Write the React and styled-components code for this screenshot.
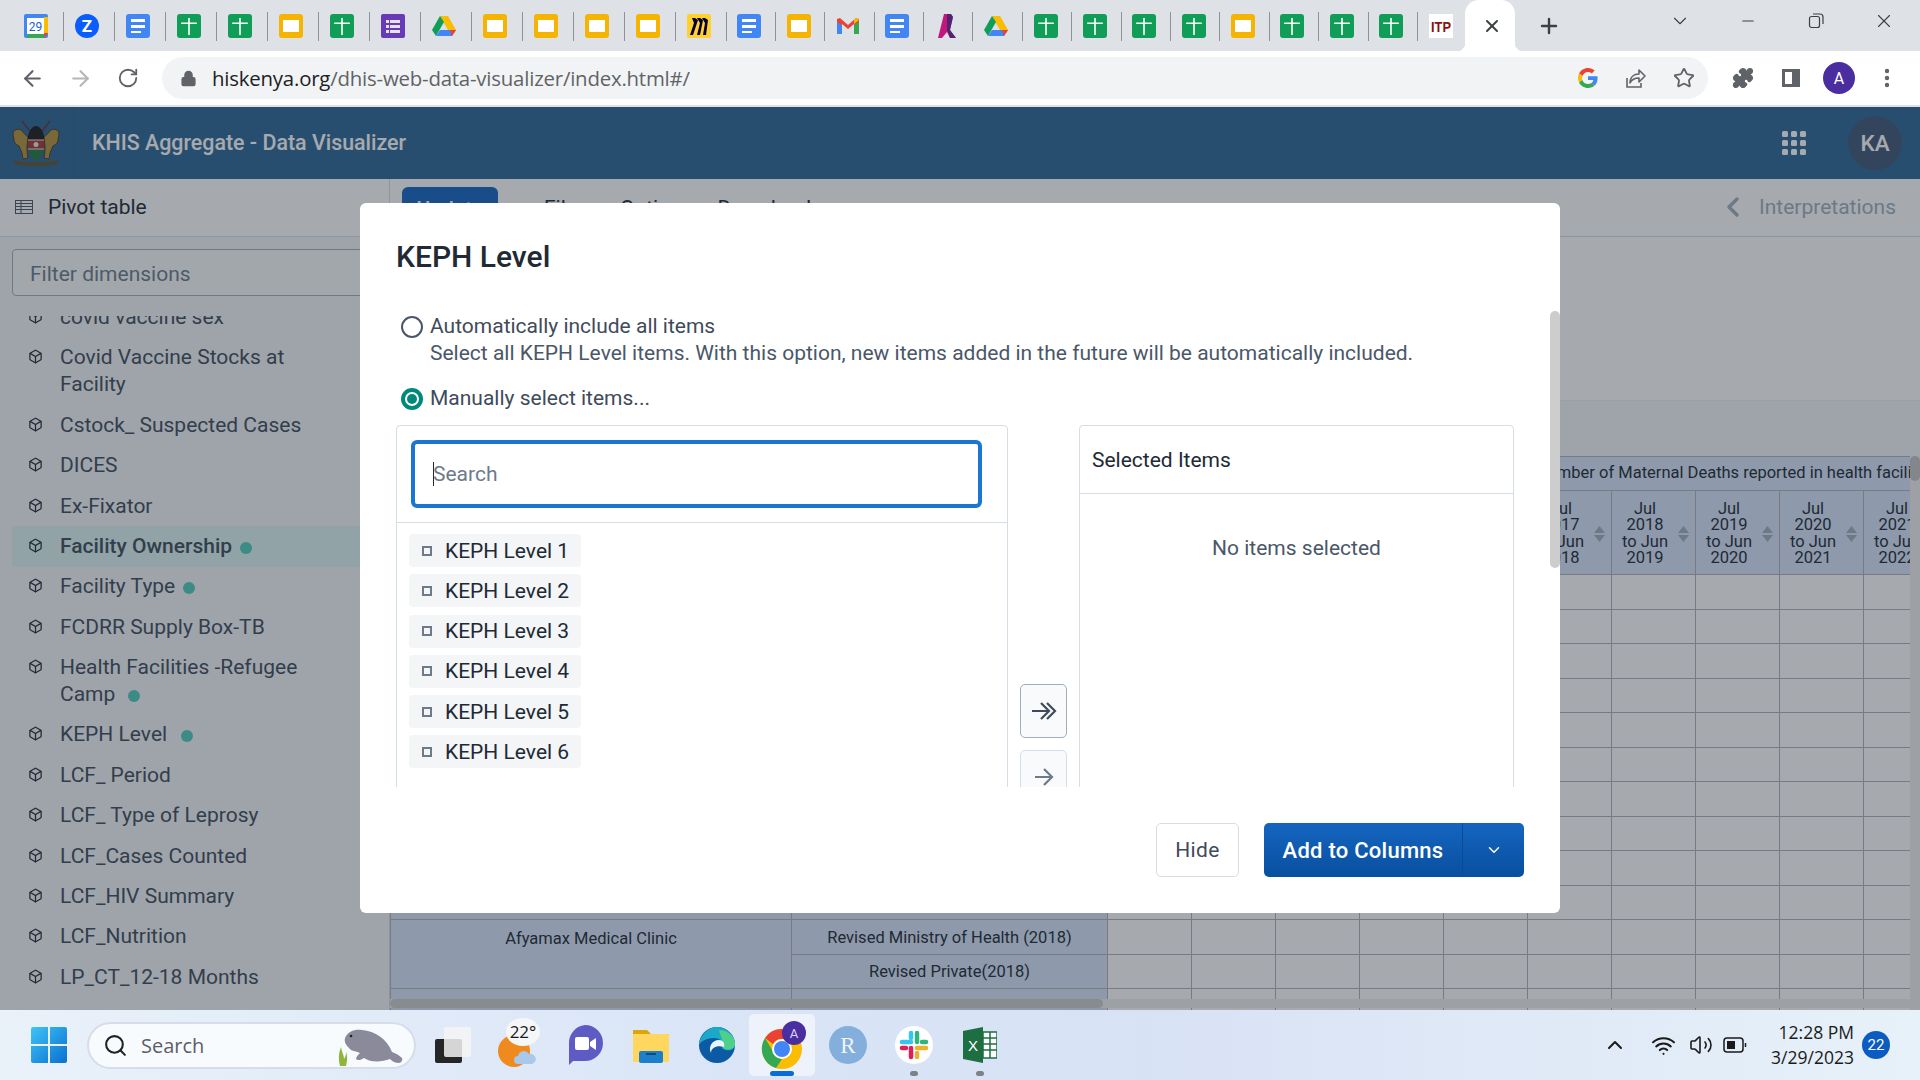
import React from 'react';
import styled, { createGlobalStyle } from 'styled-components';
import {
  ArrowLeft, ArrowRight, RotateCw, Lock, Star, Puzzle, Plus, X, Minus, ChevronDown, ChevronLeft,
  ChevronUp, Box, Search as SearchIcon, Wifi, Volume2, MoreVertical,
} from 'lucide-react';

const GlobalStyle = createGlobalStyle`
  html, body { margin: 0; padding: 0; width: 1920px; height: 1080px; overflow: hidden; }
  body { font-family: Roboto, "Liberation Sans", sans-serif; }
  * { box-sizing: border-box; }
`;

const Screen = styled.div`
  width: 1920px;
  height: 1080px;
  display: flex;
  flex-direction: column;
  overflow: hidden;
`;

/* ---------- browser chrome ---------- */
const TabStrip = styled.div`
  height: 51px;
  flex: none;
  background: #dee1e6;
  display: flex;
  align-items: stretch;
  padding-left: 10.5px;
`;

const Tab = styled.div`
  width: ${(p) => p.$w}px;
  flex: none;
  display: flex;
  align-items: center;
  justify-content: center;
  position: relative;
  padding-top: 1px;

  &::after {
    content: '';
    display: ${(p) => (p.$last ? 'none' : 'block')};
    position: absolute;
    right: -2px;
    top: 12px;
    height: 29px;
    width: 1px;
    background: #8f9296;
  }
`;

const ActiveTab = styled.div`
  width: 50px;
  flex: none;
  background: #fff;
  border-radius: 14px 14px 0 0;
  display: flex;
  align-items: center;
  justify-content: center;
  padding-left: 3px;
  color: #3c4043;
  position: relative;

  &::before, &::after {
    content: '';
    position: absolute;
    bottom: 0;
    width: 8px;
    height: 8px;
  }
  &::before { left: -8px; background: radial-gradient(circle at 0 0, #dee1e6 8px, #fff 8.5px); }
  &::after { right: -8px; background: radial-gradient(circle at 100% 0, #dee1e6 8px, #fff 8.5px); }
`;

const NewTab = styled.div`
  width: 48px;
  margin-left: 10px;
  display: flex;
  align-items: center;
  justify-content: center;
  color: #3c4043;
`;

const WindowControls = styled.div`
  margin-left: auto;
  display: flex;
  padding-right: 2px;
  padding-bottom: 9px;
`;

const WindowButton = styled.div`
  width: 68px;
  display: flex;
  align-items: center;
  justify-content: center;
  color: #3c4043;
`;

const Toolbar = styled.div`
  height: 56px;
  flex: none;
  background: #fff;
  border-bottom: 2px solid #dfe1e4;
  display: flex;
  align-items: flex-start;
  padding: 6px 9px 0 8px;
`;

const NavButton = styled.div`
  width: 48px;
  height: 42px;
  flex: none;
  display: flex;
  align-items: center;
  justify-content: center;
  color: ${(p) => (p.$off ? '#b3b6ba' : '#5f6368')};
`;

const AddressPill = styled.div`
  flex: 1;
  height: 42px;
  margin: 0 11px 0 10px;
  border-radius: 21px;
  background: #f1f3f4;
  display: flex;
  align-items: center;
  padding-left: 18px;
  color: #5f6368;
`;

const Url = styled.div`
  margin-left: 15px;
  flex: 1;
  font-family: "Open Sans", sans-serif;
  font-size: 20.4px;
  letter-spacing: -0.2px;
  color: #5f6368;
  white-space: nowrap;

  b { font-weight: 400; color: #202124; }
`;

const Avatar = styled.div`
  width: 32px;
  height: 32px;
  border-radius: 50%;
  background: #4a2ea0;
  color: #fff;
  font-size: 16px;
  display: flex;
  align-items: center;
  justify-content: center;
`;

/* ---------- page behind the dialog ---------- */
const Page = styled.div`
  flex: 1;
  min-height: 0;
  position: relative;
  display: flex;
  flex-direction: column;
  background: #f4f6f8;
`;

const AppHeader = styled.header`
  height: 72px;
  flex: none;
  background: #2c6693;
  display: flex;
  align-items: center;
  color: #fff;
`;

const LogoCell = styled.div`
  width: 74px;
  height: 100%;
  flex: none;
  display: flex;
  align-items: center;
  padding-left: 10px;
  border-right: 1px solid #2a6089;
`;

const AppTitle = styled.div`
  margin: 0 0 2px 18px;
  font-size: 21.4px;
  font-weight: 500;
`;

const AppsGrid = styled.div`
  margin-left: auto;
  display: grid;
  grid-template-columns: repeat(3, 6px);
  gap: 3px;
  margin-right: 42px;
`;

const AppsDot = styled.span`
  width: 6px;
  height: 6px;
  border-radius: 1.5px;
  background: #fff;
`;

const UserBadge = styled.div`
  width: 54px;
  height: 54px;
  margin-right: 18px;
  border-radius: 50%;
  background: #3f5875;
  display: flex;
  align-items: center;
  justify-content: center;
  font-size: 22.5px;
  font-weight: 500;
`;

const Workspace = styled.div`
  flex: 1;
  min-height: 0;
  display: flex;
`;

const Sidebar = styled.aside`
  width: 390px;
  flex: none;
  background: #f3f5f7;
  border-right: 1px solid #d5dde5;
  display: flex;
  flex-direction: column;
  overflow: hidden;
`;

const TypeRow = styled.div`
  height: 58px;
  flex: none;
  background: #fff;
  border-bottom: 1px solid #d5dde5;
  display: flex;
  align-items: center;
  padding: 0 22px 2px 15px;
  font-size: 21px;
  color: #212934;
  gap: 15px;
`;

const FilterBox = styled.div`
  margin: 12px 12px 0;
  height: 47px;
  flex: none;
  border: 1px solid #a0adba;
  border-radius: 4px;
  background: #f9fafb;
  padding: 3px 0 0 17px;
  display: flex;
  align-items: center;
  font-size: 21px;
  color: #6e7a8a;
`;

const DimScroller = styled.div`
  flex: 1;
  min-height: 0;
  margin-top: 20px;
  overflow: hidden;
  padding: 0 12px;
`;

const DimList = styled.ul`
  list-style: none;
  margin: -18.6px 0 0;
  padding: 0;
`;

const DimItem = styled.li`
  display: flex;
  align-items: flex-start;
  padding: 6.7px 0 6.7px 16px;
  border-radius: 3px;
  background: ${(p) => (p.$active ? '#dcf3f0' : 'transparent')};
  color: #404b5a;
  font-size: 21px;
  line-height: 27px;
  font-weight: ${(p) => (p.$active ? 500 : 400)};

  svg { flex: none; margin-top: 5px; color: #212934; }
`;

const DimLabel = styled.span`
  margin-left: 17px;
  max-width: 290px;
`;

const DimDot = styled.span`
  display: inline-block;
  width: 12px;
  height: 12px;
  margin-left: ${(p) => p.$gap}px;
  border-radius: 50%;
  background: #50cbb9;
  vertical-align: -1px;
`;

const Main = styled.main`
  flex: 1;
  min-width: 0;
  display: flex;
  flex-direction: column;
  background: #fff;
`;

const MenuRow = styled.div`
  height: 58px;
  flex: none;
  border-bottom: 1px solid #d5dde5;
  display: flex;
  align-items: flex-start;
  padding: 8px 24px 0 12px;
  font-size: 21px;
  color: #212934;
`;

const UpdateButton = styled.div`
  width: 96px;
  height: 44px;
  border-radius: 6px;
  background: #1565c0;
  color: #fff;
  display: flex;
  align-items: center;
  justify-content: center;
  font-weight: 500;
`;

const MenuItem = styled.div`
  margin-left: ${(p) => p.$gap}px;
  line-height: 42px;
`;

const InterpretationsToggle = styled.div`
  margin-left: auto;
  display: flex;
  align-items: center;
  gap: 10px;
  line-height: 40px;
  height: 40px;
  color: #a0adba;
`;

const TitleZone = styled.div`
  height: 164px;
  flex: none;
  border-bottom: 1px solid #e8edf2;
`;

const Band = styled.div`
  height: 55px;
  flex: none;
  background: #f4f6f8;
`;

const TableWrap = styled.div`
  flex: 1;
  min-height: 0;
  display: flex;
  overflow: hidden;
  position: relative;
`;

const TableClip = styled.div`
  width: 1520px;
  flex: none;
  overflow: hidden;
`;

const PivotTable = styled.table`
  table-layout: fixed;
  width: 1557px;
  border-collapse: collapse;
  font-size: 16.5px;
  line-height: 16.5px;
  color: #212934;
`;

const HeadCell = styled.th`
  background: #d7e4f8;
  border: 1px solid #b3b3b5;
  font-weight: 400;
  padding: 0;
  height: ${(p) => p.$h}px;
  text-align: ${(p) => p.$align || 'center'};
  padding-left: ${(p) => p.$pad || 0}px;
  white-space: nowrap;
`;

const HeadInner = styled.div`
  display: flex;
  align-items: center;
  padding: 2px 0 0 7px;
  white-space: normal;
`;

const HeadText = styled.span`
  width: 52px;
  flex: none;
  text-align: center;
`;

const SortMark = styled.svg`
  width: 11px;
  height: 16px;
  margin-left: 7px;
  flex: none;
`;

const BodyTr = styled.tr`
  height: ${(p) => p.$h}px;
`;

const RowHead = styled.td`
  background: #d7e4f8;
  border: 1px solid #b3b3b5;
  text-align: center;
  vertical-align: ${(p) => (p.$top ? 'top' : 'middle')};
  padding: ${(p) => (p.$top ? '11px 0 0' : '2px 0 0')};
  white-space: nowrap;
`;

const DataCell = styled.td`
  background: #fff;
  border: 1px solid #b3b3b5;
  padding: 0;
`;

const VTrack = styled.div`
  flex: 1;
  background: #f1f1f1;
`;

const VThumb = styled.div`
  height: 25px;
  border-radius: 5px;
  background: #c5c5c5;
`;

const HTrack = styled.div`
  position: absolute;
  left: 0;
  right: 0;
  bottom: 2px;
  height: 9px;
  background: #f1f1f1;
`;

const HThumb = styled.div`
  width: 713px;
  height: 9px;
  border-radius: 5px;
  background: #cdcdcd;
`;

/* ---------- dialog ---------- */
const Layer = styled.div`
  position: absolute;
  inset: 0;
  background: rgba(33, 43, 54, 0.4);
  display: flex;
  justify-content: center;
  align-items: flex-start;
  padding-top: 96px;
`;

const Dialog = styled.div`
  width: 1200px;
  height: 710px;
  background: #fff;
  border-radius: 6px;
  display: flex;
  flex-direction: column;
  position: relative;
`;

const DialogBody = styled.div`
  flex: 1;
  min-height: 0;
  overflow: hidden;
  padding: 36px 47px 0 36px;
`;

const DialogTitle = styled.h2`
  margin: 0 0 38px;
  font-size: 30px;
  line-height: 36px;
  font-weight: 500;
  color: #212934;
`;

const RadioRow = styled.div`
  display: flex;
  align-items: flex-start;
  margin-bottom: ${(p) => p.$mb}px;
  font-size: 21px;
  line-height: 27px;
  color: #404b5a;
`;

const RadioMark = styled.span`
  width: 22px;
  height: 22px;
  flex: none;
  margin: 3px 7px 0 5px;
  border-radius: 50%;
  border: ${(p) => (p.$on ? '4px solid #00897b' : '2px solid #4a5768')};
  display: flex;
  align-items: center;
  justify-content: center;

  &::after {
    content: '';
    display: ${(p) => (p.$on ? 'block' : 'none')};
    width: 10px;
    height: 10px;
    border-radius: 50%;
    background: #00897b;
  }
`;

const RadioHelp = styled.div`
  color: #4a5768;
`;

const Transfer = styled.div`
  display: flex;
  height: 770px;
`;

const SourcePane = styled.div`
  width: 612px;
  flex: none;
  border: 1px solid #d5dde5;
  border-radius: 4px;
  overflow: hidden;
`;

const SearchArea = styled.div`
  height: 97px;
  padding: 14px 25px 0 14px;
  border-bottom: 1px solid #d5dde5;
`;

const SearchField = styled.div`
  height: 68px;
  border: 4px solid #1976d2;
  border-radius: 6px;
  padding-left: 18px;
  display: flex;
  align-items: center;
  font-size: 21px;
  color: #6e7a8a;
`;

const Caret = styled.span`
  width: 1px;
  height: 24px;
  background: #212934;
  margin-right: -1px;
`;

const OptionList = styled.div`
  padding: 11px 12px;
  display: flex;
  flex-direction: column;
  align-items: flex-start;
  gap: 7.3px;
`;

const OptionChip = styled.div`
  height: 33px;
  width: 172px;
  padding-left: 13px;
  border-radius: 4px;
  background: #f3f5f7;
  display: flex;
  align-items: center;
  gap: 13px;
  font-size: 21px;
  color: #212934;
`;

const OptionBox = styled.span`
  width: 10px;
  height: 10px;
  border: 2px solid #6e7a8a;
  flex: none;
`;

const ActionColumn = styled.div`
  width: 71px;
  flex: none;
  display: flex;
  flex-direction: column;
  align-items: center;
  justify-content: center;
  gap: 12px;
`;

const ActionButton = styled.div`
  width: 47px;
  height: 54px;
  border-radius: 5px;
  border: 1px solid ${(p) => (p.$off ? '#d5dde5' : '#a0adba')};
  background: #f9fafb;
  display: flex;
  align-items: center;
  justify-content: center;
  color: ${(p) => (p.$off ? '#6e7a8a' : '#404b5a')};
`;

const TargetPane = styled.div`
  width: 435px;
  flex: none;
  border: 1px solid #d5dde5;
  border-radius: 4px;
`;

const TargetHeader = styled.div`
  height: 68px;
  padding-left: 12px;
  border-bottom: 1px solid #d5dde5;
  display: flex;
  align-items: center;
  font-size: 21px;
  color: #212934;
`;

const EmptyNote = styled.div`
  padding-top: 41px;
  text-align: center;
  font-size: 21px;
  line-height: 27px;
  color: #4a5768;
`;

const DialogFooter = styled.div`
  height: 126px;
  flex: none;
  padding: 36px 36px 0 0;
  display: flex;
  justify-content: flex-end;
  gap: 25px;
`;

const HideButton = styled.div`
  width: 83px;
  height: 54px;
  border: 1px solid #d5dde5;
  border-radius: 5px;
  display: flex;
  align-items: center;
  justify-content: center;
  font-size: 21px;
  letter-spacing: 0.4px;
  color: #404b5a;
`;

const SplitButton = styled.div`
  width: 260px;
  height: 54px;
  border-radius: 5px;
  background: linear-gradient(#1565c0, #084f9f);
  display: flex;
  color: #fff;
  font-size: 22px;
  font-weight: 500;
`;

const SplitMain = styled.div`
  width: 199px;
  display: flex;
  align-items: center;
  justify-content: center;
  border-right: 1px solid #0b4a94;
  letter-spacing: 0.25px;
`;

const SplitArrow = styled.div`
  flex: 1;
  display: flex;
  align-items: center;
  justify-content: center;
`;

const DialogScrollThumb = styled.div`
  position: absolute;
  right: 0;
  top: 108px;
  width: 10px;
  height: 257px;
  border-radius: 5px;
  background: #cdcdcd;
`;

/* ---------- windows taskbar ---------- */
const Taskbar = styled.footer`
  height: 70px;
  flex: none;
  background: linear-gradient(90deg, #e9f2f9 0%, #d9e4f7 40%, #d8e2f5 60%, #e7f1f9 100%);
  display: flex;
  align-items: center;
  padding-left: 31px;
`;

const StartLogo = styled.svg`
  width: 36px;
  height: 36px;
  flex: none;
`;

const SearchPill = styled.div`
  width: 329px;
  height: 47px;
  margin-left: 20px;
  flex: none;
  border-radius: 24px;
  background: #f8fbfe;
  border: 2px solid #d6dde8;
  display: flex;
  align-items: center;
  padding-left: 14px;
  gap: 13px;
  font-size: 20px;
  color: #5b5f66;
  font-family: "Open Sans", sans-serif;
  overflow: hidden;
`;

const Manatee = styled.svg`
  margin-left: auto;
  margin-right: 7px;
  width: 70px;
  height: 42px;
  flex: none;
`;

const TaskIcons = styled.div`
  display: flex;
  margin-left: 4px;
`;

const TaskSlot = styled.div`
  width: 65.9px;
  height: 62px;
  flex: none;
  display: flex;
  align-items: center;
  justify-content: center;
  position: relative;
  border-radius: 5px;
  background: ${(p) => (p.$open ? 'rgba(255,255,255,0.55)' : 'transparent')};

  &::after {
    content: '';
    display: ${(p) => (p.$run || p.$open ? 'block' : 'none')};
    position: absolute;
    bottom: 0;
    left: 50%;
    transform: translateX(-50%);
    width: ${(p) => (p.$open ? '24px' : '8px')};
    height: 5px;
    border-radius: 3px;
    background: ${(p) => (p.$open ? '#0a6cd6' : '#7d8289')};
  }
`;

const Tray = styled.div`
  margin-left: auto;
  display: flex;
  align-items: center;
  color: #1b1b1b;
`;

const TrayIcon = styled.div`
  width: ${(p) => p.$w}px;
  display: flex;
  justify-content: center;
`;

const Clock = styled.div`
  margin-left: 16px;
  text-align: right;
  font-family: "Open Sans", sans-serif;
  font-size: 17.5px;
  line-height: 25px;
  color: #1b1b1b;
`;

const CountBadge = styled.div`
  width: 28px;
  height: 28px;
  margin: 0 30px 0 8px;
  border-radius: 50%;
  background: #0b5cc0;
  color: #fff;
  font-size: 15px;
  display: flex;
  align-items: center;
  justify-content: center;
`;

/* ---------- drawn icons ---------- */
const TabIcon = ({ kind }) => {
  if (kind === 'sheet') return (
    <svg width="24" height="24" viewBox="0 0 24 24"><rect width="24" height="24" rx="3" fill="#0f9d58" /><path d="M11.200 4h1.600v4.500h7v1.600h-7V21h-1.600V10.100h-7V8.500h7z" fill="#fff" /></svg>
  );
  if (kind === 'slide') return (
    <svg width="24" height="24" viewBox="0 0 24 24"><rect width="24" height="24" rx="3" fill="#f4b400" /><rect x="4" y="6" width="16" height="12" fill="#fff" /></svg>
  );
  if (kind === 'doc') return (
    <svg width="24" height="24" viewBox="0 0 24 24"><rect width="24" height="24" rx="3" fill="#4285f4" /><path d="M5 5h14v3H5zM5 11h14v3H5zM5 17h10v2H5z" fill="#fff" /></svg>
  );
  if (kind === 'form') return (
    <svg width="24" height="24" viewBox="0 0 24 24"><rect width="24" height="24" rx="2" fill="#673ab7" /><path d="M9 6h10v3H9zM9 11h10v3H9zM9 16h10v3H9zM5 6h3v3H5zM5 11h3v3H5zM5 16h3v3H5z" fill="#e8e0f5" /></svg>
  );
  if (kind === 'drive') return (
    <svg width="24" height="24" viewBox="0 0 24 24"><path d="M8 2h8l8 14h-8z" fill="#fbbc04" /><path d="M8 2 0 16l4 6 8-14z" fill="#0f9d58" /><path d="M4 22h16l4-6H8z" fill="#4285f4" /><path d="M20 22l4-6h-6z" fill="#ea4335" /></svg>
  );
  if (kind === 'cal') return (
    <svg width="24" height="24" viewBox="0 0 24 24"><rect width="24" height="24" rx="2" fill="#4285f4" /><rect x="3" y="4" width="17" height="16" fill="#fff" /><path d="M20 3h4v16h-4z" fill="#fbbc04" /><path d="M3 20h17v4H3z" fill="#34a853" /><path d="M20 19h4l-4 5z" fill="#ea4335" /><text x="11.500" y="17" fontSize="12" fontFamily="Roboto" textAnchor="middle" fill="#1a5fd0">29</text></svg>
  );
  if (kind === 'zoom') return (
    <svg width="24" height="24" viewBox="0 0 24 24"><circle cx="12" cy="12" r="12" fill="#0b5cff" /><text x="12" y="18" fontSize="17" fontWeight="700" fontFamily="Roboto" textAnchor="middle" fill="#fff">Z</text></svg>
  );
  if (kind === 'miro') return (
    <svg width="24" height="24" viewBox="0 0 24 24"><rect width="24" height="24" rx="2" fill="#ffd02f" /><path d="M15 4h3l3 2-2 15h-3l2-12-3-5zM10 4h3l3 2-3 15h-3l3-12-3-5zM5 4h3l3 2-5 15H3l4-12-2-5z" fill="#050038" /></svg>
  );
  if (kind === 'gmail') return (
    <svg width="24" height="24" viewBox="0 0 24 24"><path d="M1 5v15h5V10l6 5 6-5v10h5V5l-3-1-8 7-8-7z" fill="#ea4335" /><path d="M1 8v12h5V11z" fill="#4285f4" /><path d="M23 8v12h-5V11z" fill="#34a853" /><path d="M18 5v5l5-4-2-2z" fill="#fbbc04" /></svg>
  );
  if (kind === 'lens') return (
    <svg width="24" height="24" viewBox="0 0 24 24"><path d="M9 0h7l2 3-3 13 6 8h-6l-3-6-5 6H3z" fill="#c2187c" /><path d="M12 0h4l2 3-3 13 6 8h-6l-3-8z" fill="#1f2a6e" opacity=".7" /></svg>
  );
  return (
    <svg width="24" height="24" viewBox="0 0 24 24"><rect width="24" height="24" fill="#fff" /><text x="12" y="18" fontSize="15" fontWeight="700" fontFamily="Liberation Sans" textLength="20" lengthAdjust="spacingAndGlyphs" textAnchor="middle" fill="#8b1010">ITP</text></svg>
  );
};

const CoatOfArms = () => (
  <svg width="52" height="48" viewBox="0 0 52 48">
    <path d="M12 2l11 14M40 2L29 16" stroke="#6b2f2a" strokeWidth="1.400" />
    <path d="M18 17c1-6 5-10 8-10s7 4 8 10z" fill="#1c1c1c" />
    <g fill="#b8923a" stroke="#3b2f14" strokeWidth=".8">
      <path d="M3 14c1-4 7-5 9-2 2 2 3 4 6 6l-1 9c0 4 0 8 1 12l-5 1-1-6-3-7c-3-2-5-3-5-6 0-3-1-4-1-7z" />
      <path d="M49 14c-1-4-7-5-9-2-2 2-3 4-6 6l1 9c0 4 0 8-1 12l5 1 1-6 3-7c3-2 5-3 5-6 0-3 1-4 1-7z" />
    </g>
    <path d="M18 17h16v9c0 7-3 12-8 16-5-4-8-9-8-16z" fill="#a83232" />
    <path d="M18 17h16v4H18z" fill="#1c1c1c" />
    <path d="M18.400 30h15.200c-1 5-3.500 9-7.600 12-4.100-3-6.600-7-7.600-12z" fill="#1f7a3f" />
    <path d="M18 21h16M18 30h16" stroke="#eee8d8" strokeWidth="1" />
    <circle cx="26" cy="25.500" r="2.500" fill="#eee8d8" />
    <path d="M5 41c8 3 34 3 42 0l1 4c-9 3-35 3-44 0z" fill="#5f5334" />
  </svg>
);

const PivotIcon = () => (
  <svg width="18" height="14" viewBox="0 0 18 14" fill="none" stroke="#4a5768" strokeWidth="1">
    <rect x=".5" y=".5" width="17" height="13" /><path d="M.5 3.500h17M.5 6.500h17M.5 9.500h17M6 .5v13" />
  </svg>
);

const GoogleG = () => (
  <svg width="20" height="20" viewBox="0 0 48 48">
    <path fill="#ea4335" d="M24 9.500c3.500 0 6.700 1.300 9.100 3.500l6.800-6.800C35.800 2.400 30.200 0 24 0 14.600 0 6.600 5.400 2.700 13.200l7.900 6.200C12.400 13.600 17.700 9.500 24 9.500z" />
    <path fill="#4285f4" d="M47 24.500c0-1.600-.2-3.100-.4-4.500H24v9h12.900c-.6 3-2.300 5.500-4.800 7.200l7.700 6C44.300 38 47 31.800 47 24.500z" />
    <path fill="#fbbc05" d="M10.500 28.600a14.500 14.500 0 0 1 0-9.200l-7.900-6.200a24 24 0 0 0 0 21.600z" />
    <path fill="#34a853" d="M24 48c6.500 0 11.900-2.100 15.900-5.800l-7.700-6c-2.200 1.400-4.900 2.300-8.200 2.300-6.300 0-11.600-4.200-13.500-9.900l-7.900 6.200C6.600 42.600 14.600 48 24 48z" />
  </svg>
);

const ShareBoxIcon = () => (
  <svg width="22" height="22" viewBox="0 0 22 22" fill="none" stroke="#5f6368" strokeWidth="1.600">
    <path d="M2 11v9h14v-4" />
    <path d="M5 16c0-6 4-9 9-9V3l6 6-6 6v-4c-4 0-7 1-9 5z" strokeLinejoin="round" />
  </svg>
);

const SidePanelIcon = () => (
  <svg width="20" height="20" viewBox="0 0 20 20"><path d="M1 1h18v18H1zM4 4v12h7V4z" fillRule="evenodd" fill="#5f6368" /></svg>
);

const DoubleArrow = () => (
  <svg width="26" height="20" viewBox="0 0 26 20" fill="none" stroke="currentColor" strokeWidth="2.200">
    <path d="M1 10h17M10 2l8 8-8 8M16 2l8 8-8 8" />
  </svg>
);

const SingleArrow = () => (
  <svg width="20" height="20" viewBox="0 0 20 20" fill="none" stroke="currentColor" strokeWidth="2.200">
    <path d="M1 10h17M10 2l8 8-8 8" />
  </svg>
);

const Sort = () => (
  <SortMark viewBox="0 0 11 16"><path d="M5.500 0 11 7H0zM5.500 16 0 9h11z" fill="#a0adba" /></SortMark>
);

const BatteryIcon = () => (
  <svg width="24" height="16" viewBox="0 0 24 16" fill="none" stroke="#1b1b1b" strokeWidth="1.500">
    <rect x="1" y="1" width="19" height="14" rx="3" /><rect x="4" y="4" width="8" height="8" fill="#1b1b1b" stroke="none" /><path d="M22.500 6v4" />
  </svg>
);

const taskArt = {
  view: (
    <svg width="36" height="36" viewBox="0 0 36 36"><rect x="0" y="12" width="27" height="24" rx="2" fill="#262626" /><rect x="9" y="0" width="27" height="30" rx="2" fill="#f4f4f4" opacity=".85" /></svg>
  ),
  weather: (
    <svg width="44" height="54" viewBox="0 0 44 54">
      <circle cx="17" cy="33" r="16" fill="#ef8a1e" />
      <path d="M21 46a4 4 0 0 1 0-8 6 6 0 0 1 11-2 5 5 0 0 1 3 10z" fill="#a9c8ec" />
      <ellipse cx="26" cy="14" rx="17" ry="14" fill="#f4f6f8" />
      <text x="26" y="20" fontSize="17" fontFamily="Open Sans" textAnchor="middle" fill="#1b1b1b">22°</text>
    </svg>
  ),
  teams: (
    <svg width="36" height="40" viewBox="0 0 36 40"><path d="M18 0a18 18 0 0 1 0 36H6l-4 4V18A18 18 0 0 1 18 0z" fill="#5f5bc4" /><rect x="8" y="12" width="14" height="13" rx="2" fill="#fff" /><path d="M23 17l6-4v12l-6-4z" fill="#fff" /></svg>
  ),
  folder: (
    <svg width="36" height="36" viewBox="0 0 36 36"><path d="M0 3h14l4 4h18v4H0z" fill="#dba50c" /><rect y="7" width="36" height="28" rx="1" fill="#ffd75e" /><rect x="6" y="24" width="24" height="12" rx="2" fill="#1b80c9" /><rect x="13" y="26" width="10" height="2" fill="#0a4a80" /></svg>
  ),
  edge: (
    <svg width="36" height="36" viewBox="0 0 36 36"><circle cx="18" cy="18" r="18" fill="#0c59a4" /><path d="M0 18C1 8 9 0 18 0c10 0 18 8 18 17 0 7-9 8-13 4 2-5-2-10-8-10-7 0-13 3-15 7z" fill="#1ba8c9" /><path d="M20 3c8 0 16 6 16 14 0 6-8 7-12 4 1-7-3-12-4-18z" fill="#4fd08a" /><path d="M12 26c-3-6 1-13 8-13 4 0 6 3 5 7-6-2-13 0-13 6z" fill="#e9f5ff" /></svg>
  ),
  chrome: (
    <svg width="44" height="48" viewBox="-2 0 44 48" style={{ overflow: 'visible' }}>
      <circle cx="20" cy="28" r="20" fill="#fbbc04" />
      <path d="M20 8a20 20 0 0 1 17 10H20a10 10 0 0 0-9 5L3 17A20 20 0 0 1 20 8z" fill="#ea4335" />
      <path d="M3 17l9 15a10 10 0 0 0 8 6l-6 9A20 20 0 0 1 3 17z" fill="#34a853" />
      <circle cx="20" cy="28" r="10" fill="#fff" /><circle cx="20" cy="28" r="8" fill="#4285f4" />
      <circle cx="32" cy="12" r="12" fill="#4a2ea0" />
      <text x="32" y="17" fontSize="13" fontFamily="Roboto" textAnchor="middle" fill="#dcd4f0">A</text>
    </svg>
  ),
  r: (
    <svg width="38" height="38" viewBox="0 0 38 38"><circle cx="19" cy="19" r="19" fill="#84aedc" /><text x="19" y="27" fontSize="23" fontFamily="Liberation Serif" textAnchor="middle" fill="#eef4fb">R</text></svg>
  ),
  slack: (
    <svg width="38" height="38" viewBox="0 0 38 38">
      <circle cx="19" cy="19" r="19" fill="#fff" />
      <path d="M7 16h9" stroke="#36c5f0" strokeWidth="4.500" strokeLinecap="round" /><path d="M16 7v5" stroke="#36c5f0" strokeWidth="4.500" strokeLinecap="round" />
      <path d="M22 7v9" stroke="#2eb67d" strokeWidth="4.500" strokeLinecap="round" /><path d="M27 16h4" stroke="#2eb67d" strokeWidth="4.500" strokeLinecap="round" />
      <path d="M22 22h9" stroke="#ecb22e" strokeWidth="4.500" strokeLinecap="round" /><path d="M22 27v4" stroke="#ecb22e" strokeWidth="4.500" strokeLinecap="round" />
      <path d="M16 22v9" stroke="#e01e5a" strokeWidth="4.500" strokeLinecap="round" /><path d="M7 22h4" stroke="#e01e5a" strokeWidth="4.500" strokeLinecap="round" />
    </svg>
  ),
  excel: (
    <svg width="34" height="36" viewBox="0 0 34 36"><path d="M0 4 20 0v36L0 32z" fill="#1d6f42" /><rect x="20" y="5" width="14" height="26" fill="#fff" stroke="#1d6f42" strokeWidth="1.500" /><path d="M20 11h14M20 17h14M20 23h14M27 5v26" stroke="#1d6f42" strokeWidth="1.500" /><text x="10" y="24" fontSize="15" fontFamily="Liberation Sans" textAnchor="middle" fill="#fff">X</text></svg>
  ),
};

const tabKinds = ['cal', 'zoom', 'doc', 'sheet', 'sheet', 'slide', 'sheet', 'form', 'drive', 'slide', 'slide', 'slide', 'slide', 'miro', 'doc', 'slide', 'gmail', 'doc', 'lens', 'drive', 'sheet', 'sheet', 'sheet', 'sheet', 'slide', 'sheet', 'sheet', 'sheet', 'itp'];

const dimensions = [
  { name: 'covid vaccine sex' },
  { name: 'Covid Vaccine Stocks at Facility' },
  { name: 'Cstock_ Suspected Cases' },
  { name: 'DICES' },
  { name: 'Ex-Fixator' },
  { name: 'Facility Ownership', dot: 8, active: true },
  { name: 'Facility Type', dot: 8 },
  { name: 'FCDRR Supply Box-TB' },
  { name: 'Health Facilities -Refugee Camp', dot: 13 },
  { name: 'KEPH Level', dot: 14 },
  { name: 'LCF_ Period' },
  { name: 'LCF_ Type of Leprosy' },
  { name: 'LCF_Cases Counted' },
  { name: 'LCF_HIV Summary' },
  { name: 'LCF_Nutrition' },
  { name: 'LP_CT_12-18 Months' },
];

const years = [2012, 2013, 2014, 2015, 2016, 2017, 2018, 2019, 2020, 2021];
const levels = [1, 2, 3, 4, 5, 6];

const App = () => (
  <Screen>
    <GlobalStyle />
    <TabStrip>
      {tabKinds.map((kind, i) => (
        <Tab key={i} $w={i < 14 ? 51 : 49.4} $last={i === tabKinds.length - 1}>
          <TabIcon kind={kind} />
        </Tab>
      ))}
      <ActiveTab><X size={20} strokeWidth={2.4} /></ActiveTab>
      <NewTab><Plus size={24} strokeWidth={2.4} /></NewTab>
      <WindowControls>
        <WindowButton><ChevronDown size={22} strokeWidth={1.2} /></WindowButton>
        <WindowButton><Minus size={18} strokeWidth={1.4} /></WindowButton>
        <WindowButton>
          <svg width="16" height="16" viewBox="0 0 16 16" fill="none" stroke="#3c4043" strokeWidth="1.200"><rect x="1.500" y="3.500" width="10" height="11" rx="2" /><path d="M5 1h7a3 3 0 0 1 3 3v7" /></svg>
        </WindowButton>
        <WindowButton><X size={22} strokeWidth={1.2} /></WindowButton>
      </WindowControls>
    </TabStrip>

    <Toolbar>
      <NavButton><ArrowLeft size={25} strokeWidth={2} /></NavButton>
      <NavButton $off><ArrowRight size={25} strokeWidth={2} /></NavButton>
      <NavButton><RotateCw size={22} strokeWidth={2} /></NavButton>
      <AddressPill>
        <Lock size={17} fill="#5f6368" strokeWidth={2} />
        <Url><b>hiskenya.org</b>/dhis-web-data-visualizer/index.html#/</Url>
        <NavButton><GoogleG /></NavButton>
        <NavButton><ShareBoxIcon /></NavButton>
        <NavButton><Star size={22} strokeWidth={2} /></NavButton>
      </AddressPill>
      <NavButton><Puzzle size={22} fill="#5f6368" /></NavButton>
      <NavButton><SidePanelIcon /></NavButton>
      <NavButton><Avatar>A</Avatar></NavButton>
      <NavButton><MoreVertical size={24} strokeWidth={2.4} /></NavButton>
    </Toolbar>

    <Page>
      <AppHeader>
        <LogoCell><CoatOfArms /></LogoCell>
        <AppTitle>KHIS Aggregate - Data Visualizer</AppTitle>
        <AppsGrid>
          {Array.from({ length: 9 }).map((_, i) => <AppsDot key={i} />)}
        </AppsGrid>
        <UserBadge>KA</UserBadge>
      </AppHeader>

      <Workspace>
        <Sidebar>
          <TypeRow>
            <PivotIcon />
            Pivot table
          </TypeRow>
          <FilterBox>Filter dimensions</FilterBox>
          <DimScroller>
            <DimList>
              {dimensions.map((d) => (
                <DimItem key={d.name} $active={d.active}>
                  <Box size={15} strokeWidth={2} />
                  <DimLabel>{d.name}{d.dot && <DimDot $gap={d.dot} />}</DimLabel>
                </DimItem>
              ))}
            </DimList>
          </DimScroller>
        </Sidebar>

        <Main>
          <MenuRow>
            <UpdateButton>Update</UpdateButton>
            <MenuItem $gap={46}>File</MenuItem>
            <MenuItem $gap={43}>Options</MenuItem>
            <MenuItem $gap={25}>Download</MenuItem>
            <InterpretationsToggle>
              <ChevronLeft size={32} strokeWidth={2.6} />
              Interpretations
            </InterpretationsToggle>
          </MenuRow>
          <TitleZone />
          <Band />
          <TableWrap>
            <TableClip>
              <PivotTable>
                <colgroup>
                  <col style={{ width: 401 }} />
                  <col style={{ width: 316 }} />
                  {years.map((y) => <col key={y} style={{ width: 84 }} />)}
                </colgroup>
                <thead>
                  <tr>
                    <HeadCell $h={34} rowSpan={2} />
                    <HeadCell $h={34} rowSpan={2} />
                    <HeadCell $h={34} colSpan={10} $align="left" $pad={428}>
                      Number of Maternal Deaths reported in health facilities
                    </HeadCell>
                  </tr>
                  <tr>
                    {years.map((y) => (
                      <HeadCell key={y} $h={84}>
                        <HeadInner>
                          <HeadText>Jul {y} to Jun {y + 1}</HeadText>
                          <Sort />
                        </HeadInner>
                      </HeadCell>
                    ))}
                  </tr>
                </thead>
                <tbody>
                  {Array.from({ length: 10 }).map((_, i) => (
                    <BodyTr key={i} $h={i % 2 ? 34 : 35}>
                      <RowHead />
                      <RowHead />
                      {years.map((y) => <DataCell key={y} />)}
                    </BodyTr>
                  ))}
                  <BodyTr $h={35}>
                    <RowHead rowSpan={2} $top>Afyamax Medical Clinic</RowHead>
                    <RowHead>Revised Ministry of Health (2018)</RowHead>
                    {years.map((y) => <DataCell key={y} />)}
                  </BodyTr>
                  <BodyTr $h={34}>
                    <RowHead>Revised Private(2018)</RowHead>
                    {years.map((y) => <DataCell key={y} />)}
                  </BodyTr>
                  <BodyTr $h={35}>
                    <RowHead />
                    <RowHead />
                    {years.map((y) => <DataCell key={y} />)}
                  </BodyTr>
                </tbody>
              </PivotTable>
            </TableClip>
            <VTrack><VThumb /></VTrack>
            <HTrack><HThumb /></HTrack>
          </TableWrap>
        </Main>
      </Workspace>

      <Layer>
        <Dialog>
          <DialogBody>
            <DialogTitle>KEPH Level</DialogTitle>
            <RadioRow $mb={18}>
              <RadioMark />
              <div>
                Automatically include all items
                <RadioHelp>Select all KEPH Level items. With this option, new items added in the future will be automatically included.</RadioHelp>
              </div>
            </RadioRow>
            <RadioRow $mb={13}>
              <RadioMark $on />
              Manually select items...
            </RadioRow>
            <Transfer>
              <SourcePane>
                <SearchArea>
                  <SearchField><Caret />Search</SearchField>
                </SearchArea>
                <OptionList>
                  {levels.map((n) => (
                    <OptionChip key={n}><OptionBox />KEPH Level {n}</OptionChip>
                  ))}
                </OptionList>
              </SourcePane>
              <ActionColumn>
                <ActionButton><DoubleArrow /></ActionButton>
                <ActionButton $off><SingleArrow /></ActionButton>
                <ActionButton $off />
                <ActionButton $off />
              </ActionColumn>
              <TargetPane>
                <TargetHeader>Selected Items</TargetHeader>
                <EmptyNote>No items selected</EmptyNote>
              </TargetPane>
            </Transfer>
          </DialogBody>
          <DialogFooter>
            <HideButton>Hide</HideButton>
            <SplitButton>
              <SplitMain>Add to Columns</SplitMain>
              <SplitArrow><ChevronDown size={18} strokeWidth={2} /></SplitArrow>
            </SplitButton>
          </DialogFooter>
          <DialogScrollThumb />
        </Dialog>
      </Layer>
    </Page>

    <Taskbar>
      <StartLogo viewBox="0 0 36 36">
        <defs>
          <linearGradient id="win" x1="0" y1="0" x2="1" y2="1">
            <stop offset="0" stopColor="#3fc4f7" /><stop offset="1" stopColor="#0a6fd0" />
          </linearGradient>
        </defs>
        <path d="M0 2a2 2 0 0 1 2-2h15v17H0zM19 0h15a2 2 0 0 1 2 2v15H19zM0 19h17v17H2a2 2 0 0 1-2-2zM19 19h17v15a2 2 0 0 1-2 2H19z" fill="url(#win)" />
      </StartLogo>
      <SearchPill>
        <SearchIcon size={25} strokeWidth={2} color="#202124" />
        Search
        <Manatee viewBox="0 0 70 42">
          <path d="M3 42c-2-8-1-14 1-19 1 6 3 8 3 12 2-3 2-5 2-7 2 5 1 10 0 14z" fill="#8fb53a" />
          <path d="M8 14c3-7 10-9 17-8 13 1 25 9 30 22 3 1 7 3 10 6 1 2-1 5-3 5-3 0-6-1-9-4-8 3-19 4-26-1-3 2-6 3-8 1 0-2 2-4 4-6-3-2-8-1-11-5-3-3-5-6-4-10z" fill="#8a8a9a" />
          <circle cx="14" cy="12" r="1.300" fill="#222" />
        </Manatee>
      </SearchPill>
      <TaskIcons>
        <TaskSlot>{taskArt.view}</TaskSlot>
        <TaskSlot>{taskArt.weather}</TaskSlot>
        <TaskSlot>{taskArt.teams}</TaskSlot>
        <TaskSlot>{taskArt.folder}</TaskSlot>
        <TaskSlot>{taskArt.edge}</TaskSlot>
        <TaskSlot $open>{taskArt.chrome}</TaskSlot>
        <TaskSlot>{taskArt.r}</TaskSlot>
        <TaskSlot $run>{taskArt.slack}</TaskSlot>
        <TaskSlot $run>{taskArt.excel}</TaskSlot>
      </TaskIcons>
      <Tray>
        <TrayIcon $w={48}><ChevronUp size={24} strokeWidth={2} /></TrayIcon>
        <TrayIcon $w={48}><Wifi size={25} strokeWidth={2} /></TrayIcon>
        <TrayIcon $w={28}><Volume2 size={24} strokeWidth={1.6} /></TrayIcon>
        <TrayIcon $w={40}><BatteryIcon /></TrayIcon>
        <Clock>12:28 PM<br />3/29/2023</Clock>
        <CountBadge>22</CountBadge>
      </Tray>
    </Taskbar>
  </Screen>
);

export default App;
